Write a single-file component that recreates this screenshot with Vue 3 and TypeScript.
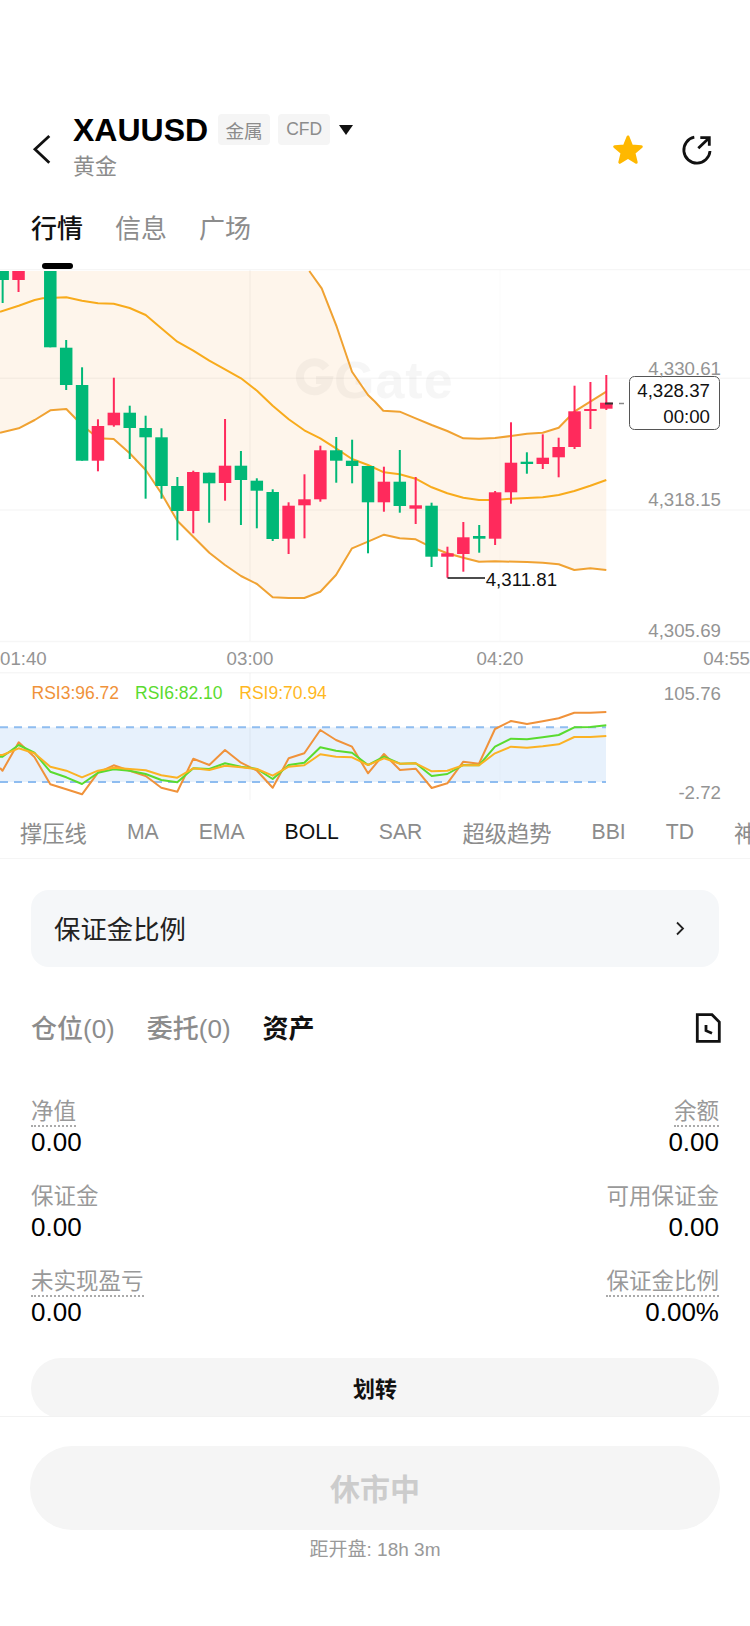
<script setup lang="ts">
type Candle = [number, number, number, number, number];
type Pt = [number, number];

const candleX = (i: number) => 50.3 + 15.886 * i;

// [index, wick top, body top, body bottom, wick bottom]
const candles: Candle[] = [
  [-3, 271, 271, 280, 303],
  [-2, 271, 271, 280, 292],
  [0, 271, 271, 347.3, 347.3],
  [1, 340, 347.7, 385, 390],
  [2, 367.3, 385, 460.7, 460.7],
  [3, 419.3, 426, 460.7, 471.3],
  [4, 377.7, 412.7, 425.3, 426.7],
  [5, 405.7, 412.7, 428, 459],
  [6, 415.7, 428, 437.3, 498.7],
  [7, 428.3, 437.3, 486, 498.7],
  [8, 477, 486, 511, 540.3],
  [9, 470.7, 472, 511, 533.3],
  [10, 472.7, 472.7, 483.3, 522.7],
  [11, 419, 465.7, 483, 500.7],
  [12, 451, 465.7, 480, 525],
  [13, 478.3, 480.7, 490.7, 528.3],
  [14, 489.3, 492, 539, 541],
  [15, 502.3, 505.7, 538.7, 554],
  [16, 474.3, 499.3, 505.3, 538.3],
  [17, 445.7, 450.3, 499.3, 501.7],
  [18, 437, 450.3, 460.7, 482.7],
  [19, 439.7, 460.7, 466, 483.3],
  [20, 466, 466, 502.3, 553.3],
  [21, 466.7, 481.7, 502.3, 511.7],
  [22, 450, 481.7, 506, 512.7],
  [23, 477, 505.3, 508.7, 524],
  [24, 502.7, 505.7, 556.7, 567],
  [25, 546.7, 553.3, 556.7, 577.7],
  [26, 522, 537.3, 554, 571.7],
  [27, 525, 536, 538.7, 552.7],
  [28, 491, 492.3, 538.7, 545],
  [29, 422.3, 462.7, 492.3, 503.7],
  [30, 452.3, 461.7, 464, 473.7],
  [31, 434.3, 457.7, 464, 469],
  [32, 437.7, 447, 457.3, 477.3],
  [33, 385.7, 411.3, 447, 449],
  [34, 382, 409, 410, 429],
  [35, 375, 402.7, 408.7, 410],
];

const greens = new Set([-3, 0, 1, 2, 5, 6, 7, 8, 10, 12, 13, 14, 18, 19, 20, 22, 24, 27, 30]);

const upper: Pt[] = [
  [0, 271], [309.3, 271], [321.7, 288.3], [336.7, 326.7], [352, 371.7], [368, 395], [375, 401.7],
  [383.3, 410.7], [399.7, 411.7], [415.7, 418.3], [431.7, 425], [447.3, 431], [463.3, 438.3],
  [479, 438.7], [495, 438], [511, 436], [527, 433.7], [542.7, 432.7], [558.7, 427.7],
  [574.3, 411.7], [590.3, 401.7], [606.3, 391.7],
];

const middle: Pt[] = [
  [0, 311.7], [18.7, 305.7], [34.7, 300], [42.7, 298.3], [66.3, 297.3], [82, 300.7], [98, 303.3],
  [113.7, 303.7], [129.7, 308], [145.7, 315], [161.3, 328.3], [177.3, 341.7], [193.3, 350.7],
  [209.3, 360.7], [225, 369.3], [241, 378.3], [257, 390.7], [272.7, 405.7], [288.7, 419.3],
  [304.3, 430.3], [320.3, 438.3], [336, 448.3], [352, 459], [368, 465], [384, 472.3], [399.7, 474.3],
  [415.7, 478.7], [431.7, 487.3], [447.3, 493.3], [463.3, 497.7], [479, 500], [495, 500],
  [511, 498.7], [527, 498], [542.7, 497.3], [558.7, 495], [574.3, 491], [590.3, 485.7], [606.3, 480],
];

const lower: Pt[] = [
  [0, 432.7], [18.7, 428.3], [34.7, 420], [50.3, 410.3], [66.3, 409], [82, 425], [98, 438.3],
  [113.7, 439], [129.7, 453.3], [145.7, 470], [161.3, 493.3], [177.3, 520.7], [193.3, 536.7],
  [209.3, 552.7], [225, 565], [241, 576], [257, 584], [272.7, 597.3], [288.7, 598], [304.3, 598],
  [320.3, 591.7], [336, 575], [352, 548.3], [368, 541.7], [384, 534.7], [399.7, 538.3],
  [415.7, 539.3], [431.7, 547.3], [447.3, 553.3], [463.3, 557.7], [479, 561.7], [495, 561.3],
  [527, 562], [542.7, 562.7], [558.7, 564.3], [574.3, 570], [590.3, 568.3], [606.3, 570],
];

const rsi3: Pt[] = [
  [0, 768], [2.5, 770.7], [18.7, 742.3], [34.4, 757], [50.3, 784.3], [66.3, 789.3], [82, 794.3],
  [98, 772.7], [113.7, 765.3], [129.7, 770.7], [145.7, 776], [161.3, 787.7], [177.3, 791.7],
  [193.3, 758.7], [209.3, 765], [225, 750], [241, 762.7], [257, 770.7], [272.7, 787.7],
  [288.7, 758.3], [304.3, 753.3], [320.3, 730], [336, 740], [352, 746.7], [368, 773.3], [384, 754],
  [400, 770], [415.7, 768.7], [431.7, 788], [447.3, 783.3], [463.3, 761.7], [479, 763.7], [495, 729],
  [511, 721], [527, 724], [542.7, 721.3], [558.7, 718.3], [574.3, 712.7], [590.3, 712.7], [606.3, 712],
];

const rsi6: Pt[] = [
  [0, 756.7], [2.5, 756.7], [18.7, 745], [34.4, 752.7], [50.3, 771.7], [66.3, 777.3], [82, 784],
  [98, 772.7], [113.7, 769.3], [129.7, 770.7], [145.7, 774], [161.3, 780], [177.3, 782.3],
  [193.3, 768.3], [209.3, 769], [225, 763.3], [241, 766.7], [257, 769], [272.7, 779], [288.7, 765],
  [304.3, 762.7], [320.3, 747.3], [336, 750.7], [352, 752.7], [368, 765], [384, 756.7], [400, 763.7],
  [415.7, 763.3], [431.7, 776], [447.3, 774], [463.3, 765], [479, 765.3], [495, 746.7], [511, 738.7],
  [527, 739.3], [542.7, 737.3], [558.7, 735], [574.3, 727.3], [590.3, 727], [606.3, 725.3],
];

const rsi9: Pt[] = [
  [0, 755], [2.5, 755], [18.7, 748.3], [34.4, 753.3], [50.3, 766.7], [66.3, 770.7], [82, 777.3],
  [98, 770.7], [113.7, 767.7], [129.7, 769], [145.7, 770.3], [161.3, 775.3], [177.3, 777.7],
  [193.3, 768.3], [209.3, 770], [225, 765.7], [241, 767.3], [257, 769], [272.7, 775.7], [288.7, 766.7],
  [304.3, 765.3], [320.3, 754.3], [336, 756.7], [352, 757.3], [368, 765], [384, 758.3], [400, 763.7],
  [415.7, 763.3], [431.7, 771.3], [447.3, 770.7], [463.3, 765.3], [479, 765.3], [495, 753.3],
  [511, 746.7], [527, 747.7], [542.7, 746.3], [558.7, 744.3], [574.3, 737], [590.3, 737], [606.3, 736],
];

const toPoints = (pts: Pt[]) => pts.map((p) => p.join(',')).join(' ');
const bandFill = toPoints([...upper, ...[...lower].reverse()]);

const priceLabels = [
  { text: '4,330.61', y: 374.7 },
  { text: '4,318.15', y: 506 },
  { text: '4,305.69', y: 637.4 },
  { text: '105.76', y: 700 },
  { text: '-2.72', y: 799.4 },
];

const indicators = ['撑压线', 'MA', 'EMA', 'BOLL', 'SAR', '超级趋势', 'BBI', 'TD', '神'];
const isLatin = (name: string) => /^[A-Z]+$/.test(name);

const stats = [
  { label: '净值', value: '0.00', dotted: true },
  { label: '余额', value: '0.00', dotted: true },
  { label: '保证金', value: '0.00', dotted: false },
  { label: '可用保证金', value: '0.00', dotted: false },
  { label: '未实现盈亏', value: '0.00', dotted: true },
  { label: '保证金比例', value: '0.00%', dotted: true },
];
</script>

<template>
  <div class="page">
    <main class="main">
      <header class="header">
        <svg class="back" width="24" height="34" viewBox="0 0 24 34" fill="none" stroke="#111" stroke-width="2.8">
          <path d="M19.3 3 5 16.3 19.3 29.7" />
        </svg>
        <div class="title">
          <div class="title-row">
            <span class="symbol">XAUUSD</span>
            <span class="tag tag-cn">金属</span>
            <span class="tag">CFD</span>
            <span class="caret"></span>
          </div>
          <div class="subtitle">黄金</div>
        </div>
        <div class="actions">
          <svg width="34" height="32" viewBox="0 0 32 32" fill="#ffb800" stroke="#ffb800" stroke-width="3" stroke-linejoin="round">
            <path d="M16 3 19.6 12 29.3 12.7 21.9 18.9 24.2 28.3 16 23.2 7.8 28.3 10.1 18.9 2.7 12.7 12.4 12Z" />
          </svg>
          <svg width="32" height="32" viewBox="0 0 32 32" fill="none" stroke="#111" stroke-width="2.8">
            <path d="M13.3 3.2A13.1 13.1 0 1 0 29 17" />
            <path d="M17.3 14.3 28.3 3.7M19.3 3.7H28.3V11.7" />
          </svg>
        </div>
      </header>

      <nav class="tabs">
        <div class="tab active">行情<span class="tab-bar"></span></div>
        <div class="tab">信息</div>
        <div class="tab">广场</div>
      </nav>

      <svg class="chart" width="750" height="541" viewBox="0 269 750 541">
        <polygon :points="bandFill" fill="#fef5eb" />
        <rect x="0" y="727.3" width="606" height="54.7" fill="#e7f1fc" />

        <g stroke="#000" stroke-width="1.4">
          <path stroke-opacity="0.035" d="M0 269.5H750M0 378.3H750M0 510H750M0 641.5H750M0 672.7H750" />
          <path stroke-opacity="0.035" d="M250 270V641M250 673V800" />
          <path stroke-opacity="0.015" d="M500 270V641M500 673V800" />
        </g>

        <g class="watermark">
          <path d="M326 368A14.5 14.5 0 1 0 328.5 380H316" fill="none" stroke="#000" stroke-width="8" />
          <text x="334" y="398">Gate</text>
        </g>

        <polyline :points="toPoints(upper.slice(1))" class="line" stroke="#f0a232" />
        <polyline :points="toPoints(middle)" class="line" stroke="#f8ab1c" />
        <polyline :points="toPoints(lower)" class="line" stroke="#f0a232" />

        <g v-for="c in candles" :key="c[0]" :fill="greens.has(c[0]) ? '#00b877' : '#ff2a5c'">
          <rect :x="candleX(c[0]) - 1" :y="c[1]" width="2" :height="c[4] - c[1]" />
          <rect :x="candleX(c[0]) - 6.25" :y="c[2]" width="12.5" :height="Math.max(c[3] - c[2], 2)" />
        </g>

        <path d="M605 403.5H613" stroke="#333" stroke-width="2" />
        <path d="M619 403.5H624" stroke="#888" stroke-width="1.5" />
        <rect x="629.5" y="376.5" width="90" height="53" rx="5" fill="#fff" stroke="#555" />
        <text class="axis dark" x="710" y="397.4">4,328.37</text>
        <text class="axis dark" x="710" y="422.7">00:00</text>

        <path d="M447.5 578H485" stroke="#111" stroke-width="1.6" />
        <text class="axis dark start" x="485.7" y="585.7">4,311.81</text>

        <text v-for="p in priceLabels" :key="p.text" class="axis" x="721" :y="p.y">{{ p.text }}</text>

        <text class="axis start" x="0" y="664.7">01:40</text>
        <text class="axis middle" x="250" y="664.7">03:00</text>
        <text class="axis middle" x="500" y="664.7">04:20</text>
        <text class="axis" x="750" y="664.7">04:55</text>

        <text class="rsi-label" x="31.5" y="699" fill="#f0923a">RSI3:96.72</text>
        <text class="rsi-label" x="135" y="699" fill="#5adb2f">RSI6:82.10</text>
        <text class="rsi-label" x="239.3" y="699" fill="#ffb81f">RSI9:70.94</text>

        <path d="M0 727.3H606M0 782H606" stroke="#8fbdf0" stroke-width="2" stroke-dasharray="8 6" />

        <polyline :points="toPoints(rsi3)" class="line" stroke="#f0923a" />
        <polyline :points="toPoints(rsi6)" class="line" stroke="#5adb2f" />
        <polyline :points="toPoints(rsi9)" class="line" stroke="#fbb224" />
      </svg>

      <div class="indicators">
        <span
          v-for="name in indicators"
          :key="name"
          class="indicator"
          :class="{ active: name === 'BOLL', latin: isLatin(name) }"
        >{{ name }}</span>
      </div>

      <section class="content">
        <div class="card">
          <span class="card-title">保证金比例</span>
          <svg width="10" height="15" viewBox="0 0 10 15" fill="none" stroke="#222" stroke-width="1.8">
            <path d="M2 1.5 8 7.5 2 13.5" />
          </svg>
        </div>

        <div class="sub-tabs">
          <span>仓位(0)</span>
          <span>委托(0)</span>
          <span class="active">资产</span>
          <svg class="doc" width="28" height="32" viewBox="0 0 28 32" fill="none" stroke="#111" stroke-width="2.8">
            <path d="M3.3 2.7H18L25.3 10V29.3H3.3Z" />
            <path d="M12 13V18.7L18 21.3" />
          </svg>
        </div>

        <div class="stats">
          <div v-for="s in stats" :key="s.label" class="stat">
            <span class="stat-label" :class="{ dotted: s.dotted }">{{ s.label }}</span>
            <span class="stat-value">{{ s.value }}</span>
          </div>
        </div>

        <button class="transfer">划转</button>
      </section>
    </main>

    <footer class="footer">
      <button class="closed">休市中</button>
      <div class="countdown">距开盘: 18h 3m</div>
    </footer>
  </div>
</template>

<style>
body {
  margin: 0;
  background: #fff;
}
</style>

<style scoped>
.page {
  width: 750px;
  height: 1626px;
  display: flex;
  flex-direction: column;
  background: #fff;
  overflow: hidden;
  font-family: 'Liberation Sans', 'Noto Sans CJK SC', sans-serif;
  color: #111;
}

.main {
  flex: 1;
  min-height: 0;
  overflow: hidden;
}

.header {
  display: flex;
  align-items: flex-start;
  padding: 114px 37px 0 30px;
}

.back {
  margin-top: 19px;
  flex-shrink: 0;
}

.title {
  margin-left: 19px;
}

.title-row {
  display: flex;
  align-items: center;
  height: 31px;
}

.symbol {
  padding-top: 2px;
  font-size: 32px;
  font-weight: 700;
  line-height: 31px;
  color: #000;
}

.tag {
  display: flex;
  align-items: center;
  justify-content: center;
  width: 52px;
  height: 31px;
  margin-left: 8px;
  border-radius: 4px;
  background: #f5f5f5;
  color: #8c8c8c;
  font-size: 17.5px;
}

.tag-cn {
  margin-left: 10px;
  font-size: 18.7px;
}

.caret {
  margin-left: 9px;
  border-left: 7px solid transparent;
  border-right: 7px solid transparent;
  border-top: 10px solid #111;
}

.subtitle {
  margin-top: 7px;
  font-size: 22px;
  line-height: 30px;
  color: #8c8c8c;
}

.actions {
  margin-left: auto;
  margin-top: 20px;
  display: flex;
  gap: 36px;
}

.tabs {
  display: flex;
  gap: 32px;
  margin-top: 29px;
  padding-left: 31px;
}

.tab {
  display: flex;
  flex-direction: column;
  align-items: center;
  font-size: 26px;
  line-height: 36px;
  color: #8c8c8c;
}

.tab.active {
  font-weight: 500;
  color: #111;
}

.tab-bar {
  width: 31px;
  height: 6px;
  margin-top: 16px;
  border-radius: 3px;
  background: #000;
}

.chart {
  display: block;
}

.watermark {
  opacity: 0.03;
}

.watermark text {
  font-size: 52px;
  font-weight: 700;
  letter-spacing: 1px;
  fill: #000;
}

.line {
  fill: none;
  stroke-width: 2;
  stroke-linejoin: round;
}

.axis {
  font-size: 18.7px;
  fill: #949494;
  text-anchor: end;
}

.axis.dark {
  fill: #111;
}

.axis.start {
  text-anchor: start;
}

.axis.middle {
  text-anchor: middle;
}

.rsi-label {
  font-size: 17.5px;
}

.indicators {
  display: flex;
  gap: 40px;
  height: 49px;
  padding: 0 0 5px 20px;
  box-sizing: border-box;
  align-items: center;
  overflow: hidden;
  border-bottom: 1px solid #f5f5f5;
  white-space: nowrap;
}

.indicator {
  font-size: 22.3px;
  color: #8c8c8c;
  flex-shrink: 0;
}

.indicator.latin {
  font-size: 21.2px;
}

.indicator.active {
  color: #111;
}

.content {
  padding: 31px 31px 0;
}

.card {
  display: flex;
  align-items: center;
  justify-content: space-between;
  height: 77px;
  padding: 0 34px 0 23px;
  border-radius: 18px;
  background: #f5f7f9;
  font-size: 26.4px;
  color: #222;
}

.card-title {
  padding-bottom: 2px;
}

.sub-tabs {
  display: flex;
  align-items: center;
  gap: 32px;
  height: 36px;
  margin-top: 43px;
  font-size: 26px;
  font-weight: 500;
  color: #8c8c8c;
}

.sub-tabs span {
  padding-bottom: 4px;
}

.sub-tabs .active {
  font-weight: 700;
  color: #111;
}

.doc {
  margin-left: auto;
  margin-right: -3px;
}

.stats {
  display: grid;
  grid-template-columns: 1fr 1fr;
  row-gap: 27px;
  margin-top: 53px;
}

.stat {
  display: flex;
  flex-direction: column;
  align-items: flex-start;
}

.stat:nth-child(even) {
  align-items: flex-end;
}

.stat-label {
  font-size: 22.5px;
  line-height: 26px;
  color: #999;
  border-bottom: 2px solid transparent;
}

.stat-label.dotted {
  border-bottom: 2px dotted #aaa;
}

.stat-value {
  font-size: 26px;
  line-height: 30px;
  color: #000;
}

.transfer {
  display: block;
  width: 100%;
  height: 60px;
  margin-top: 31px;
  padding: 0 0 3px;
  border: none;
  border-radius: 30px;
  background: #f5f5f5;
  font-family: inherit;
  font-size: 22px;
  font-weight: 700;
  color: #111;
}

.footer {
  flex-shrink: 0;
  height: 210px;
  box-sizing: border-box;
  padding: 29px 30px 0;
  border-top: 1px solid #f2f2f2;
  background: #fff;
}

.closed {
  display: block;
  width: 100%;
  height: 84px;
  padding: 0 0 3px;
  border: none;
  border-radius: 42px;
  background: #f5f5f5;
  font-family: inherit;
  font-size: 30px;
  font-weight: 700;
  color: #ccc;
}

.countdown {
  margin-top: 6px;
  text-align: center;
  font-size: 19px;
  line-height: 28px;
  color: #999;
}
</style>
